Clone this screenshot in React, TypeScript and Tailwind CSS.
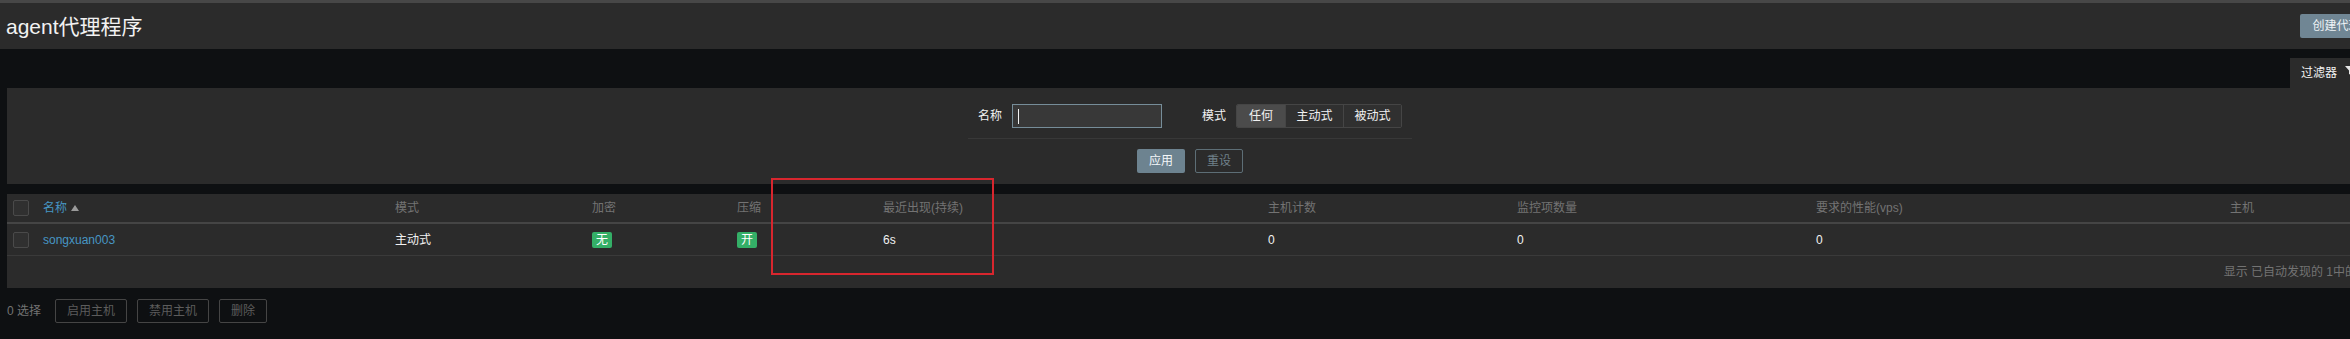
import React from "react";

const cols = "grid grid-cols-[30px_352px_197px_145px_146px_385px_249px_299px_414px_149px]";

function Check() {
  return <div className="w-[16px] h-[16px] border border-[#4a4a4a] bg-[#303030] rounded-[2px]" />;
}

function Badge({ t }: { t: string }) {
  return (
    <span className="inline-flex items-center justify-center w-[20px] h-[16px] bg-[#34af67] text-white rounded-[2px] text-[12px] leading-none">
      {t}
    </span>
  );
}

export default function App() {
  return (
    <div className="w-[2350px] h-[339px] overflow-hidden bg-[#0e1012]">
      <div className="relative w-[2380px] h-[339px] text-[12px] leading-none text-[#f2f2f2] font-['Liberation_Sans','Noto_Sans_CJK_SC',sans-serif]">
        <div className="h-[3px] bg-[#474747]" />
        <header className="h-[46px] bg-[#2b2b2b] flex items-center justify-between pl-[6px] pr-[7px]">
          <h1 className="text-[21px] leading-none font-normal text-[#f2f2f2]">agent代理程序</h1>
          <button className="h-[24px] w-[73px] rounded-[2px] bg-[#708694] text-[#eef3f6] text-[12px]">创建代理</button>
        </header>

        <div className="flex justify-end pr-[7px] mt-[9px]">
          <div className="h-[30px] w-[83px] bg-[#2b2b2b] flex items-center pl-[11px] gap-[8px] text-[#f2f2f2]">
            <span>过滤器</span>
            <svg width="10" height="10" viewBox="0 0 10 10" className="-mt-[4px]">
              <path d="M0 0 H10 L6 4.5 V9 L4 8 V4.5 Z" fill="#e6e6e6" />
            </svg>
          </div>
        </div>

        <div className="mx-[7px] bg-[#2b2b2b] pt-[16px] pb-[11px] flex flex-col items-center">
          <div className="flex items-center px-[10px] pb-[10px] border-b border-[#383838]">
            <span className="w-[24px]">名称</span>
            <div className="ml-[10px] w-[150px] h-[24px] border border-[#768d99] bg-[#383838] flex items-center pl-[5px]">
              <span className="w-[1px] h-[15px] bg-[#f2f2f2]" />
            </div>
            <span className="ml-[40px] w-[24px]">模式</span>
            <div className="ml-[10px] h-[24px] flex border border-[#454545] rounded-[2px] overflow-hidden">
              <span className="w-[48px] flex items-center justify-center bg-[#4b4b4b]">任何</span>
              <span className="w-[58px] flex items-center justify-center bg-[#303030] border-l border-[#454545]">主动式</span>
              <span className="w-[58px] flex items-center justify-center bg-[#303030] border-l border-[#454545]">被动式</span>
            </div>
          </div>
          <div className="flex gap-[10px] mt-[10px]">
            <button className="w-[48px] h-[24px] rounded-[2px] bg-[#6d8390] text-[#f4f7f9]">应用</button>
            <button className="w-[48px] h-[24px] rounded-[2px] border border-[#5d6e76] text-[#6f8089]">重设</button>
          </div>
        </div>

        <div className="mx-[7px] mt-[10px] bg-[#2b2b2b]">
          <div className={`${cols} h-[30px] border-b-2 border-[#454545] items-center text-[#737373]`}>
            <div className="pl-[6px]"><Check /></div>
            <div className="pl-[6px] flex items-center gap-[4px] text-[#4796c4]">
              <span>名称</span>
              <svg width="8" height="6" viewBox="0 0 8 6"><path d="M0 6 L4 0 L8 6 Z" fill="#9a9a9a" /></svg>
            </div>
            <div className="pl-[6px]">模式</div>
            <div className="pl-[6px]">加密</div>
            <div className="pl-[6px]">压缩</div>
            <div className="pl-[6px]">最近出现(持续)</div>
            <div className="pl-[6px]">主机计数</div>
            <div className="pl-[6px]">监控项数量</div>
            <div className="pl-[6px]">要求的性能(vps)</div>
            <div className="pl-[6px]">主机</div>
          </div>
          <div className={`${cols} h-[32px] border-b border-[#3a3a3a] items-center`}>
            <div className="pl-[6px]"><Check /></div>
            <div className="pl-[6px] text-[#4796c4]">songxuan003</div>
            <div className="pl-[6px]">主动式</div>
            <div className="pl-[6px]"><Badge t="无" /></div>
            <div className="pl-[6px]"><Badge t="开" /></div>
            <div className="pl-[6px]">6s</div>
            <div className="pl-[6px]">0</div>
            <div className="pl-[6px]">0</div>
            <div className="pl-[6px]">0</div>
            <div className="pl-[6px]" />
          </div>
          <div className="h-[32px] flex items-center justify-end pr-[6px] text-[#737373]">
            显示 已自动发现的 1中的 1
          </div>
        </div>

        <div className="flex items-center mt-[11px] pl-[7px] text-[#737373]">
          <span className="w-[48px]">0 选择</span>
          <button className="w-[72px] h-[24px] rounded-[2px] border border-[#454545] text-[#5c5c5c]">启用主机</button>
          <button className="ml-[10px] w-[72px] h-[24px] rounded-[2px] border border-[#454545] text-[#5c5c5c]">禁用主机</button>
          <button className="ml-[10px] w-[48px] h-[24px] rounded-[2px] border border-[#454545] text-[#5c5c5c]">删除</button>
        </div>

        <div className="absolute left-[771px] top-[178px] w-[223px] h-[97px] border-2 border-[#d8262e]" />
      </div>
    </div>
  );
}
